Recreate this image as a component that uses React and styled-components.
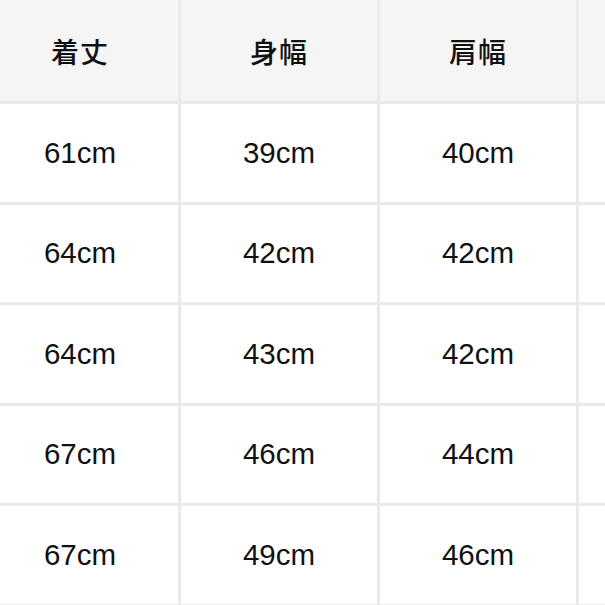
import React from "react";
import styled, { createGlobalStyle } from "styled-components";

const Global = createGlobalStyle`
  html, body {
    margin: 0;
    padding: 0;
    background: #ffffff;
    overflow: hidden;
  }
  body {
    width: 605px;
    height: 605px;
  }
`;

const Viewport = styled.div`
  width: 605px;
  height: 605px;
  overflow: hidden;
  background: #ffffff;
`;

const Table = styled.div`
  display: grid;
  grid-template-columns: repeat(4, 196px);
  grid-template-rows: 101px repeat(5, 97.5px);
  gap: 3px;
  background: #eaeaea;
  margin-left: -18px;
  width: max-content;
  padding-bottom: 3px;
`;

const Cell = styled.div`
  display: flex;
  align-items: center;
  justify-content: center;
  background: ${(p) => (p.$head ? "#f5f5f5" : "#ffffff")};
  color: #111111;
  font-family: ${(p) =>
    p.$head
      ? '"Noto Sans CJK JP", "Noto Sans CJK SC", sans-serif'
      : '"Liberation Sans", Arial, sans-serif'};
  font-size: ${(p) => (p.$head ? "28px" : "29.5px")};
  font-weight: ${(p) => (p.$head ? 500 : 400)};
  letter-spacing: ${(p) => (p.$head ? "1px" : "0")};
  white-space: nowrap;
`;

const headers = ["着丈", "身幅", "肩幅", ""];
const rows = [
  ["61cm", "39cm", "40cm", ""],
  ["64cm", "42cm", "42cm", ""],
  ["64cm", "43cm", "42cm", ""],
  ["67cm", "46cm", "44cm", ""],
  ["67cm", "49cm", "46cm", ""],
];

export default function App() {
  return (
    <>
      <Global />
      <Viewport>
        <Table>
          {headers.map((h, i) => (
            <Cell key={"h" + i} $head>
              {h}
            </Cell>
          ))}
          {rows.map((r, ri) =>
            r.map((v, ci) => <Cell key={ri + "-" + ci}>{v}</Cell>)
          )}
        </Table>
      </Viewport>
    </>
  );
}
